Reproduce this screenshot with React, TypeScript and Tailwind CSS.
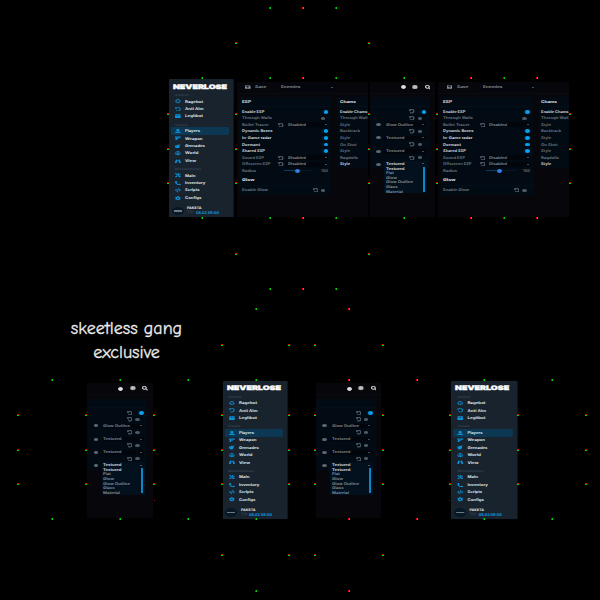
import React, { useLayoutEffect, useRef } from "react";
import { FaCog, FaCrosshairs, FaUndoAlt, FaMouse, FaBomb, FaGlobe, FaCode, FaTools, FaPhoneAlt, FaSave, FaSearch, FaCircle, FaUserAlt, FaSun, FaBinoculars } from "react-icons/fa";
import { FaGun } from "react-icons/fa6";

type Icon = React.ComponentType<{ className?: string; preserveAspectRatio?: string }>;

// A label stretched horizontally to an exact width. The hair of rotation keeps
// such small glyphs from being snapped to whole pixel rows.
function T({
  children,
  w,
  c = "text-[#7f8b95]",
  size = "text-[3.8px] font-bold",
}: {
  children: string;
  w: number;
  c?: string;
  size?: string;
}) {
  const ref = useRef<HTMLSpanElement>(null);
  useLayoutEffect(() => {
    const el = ref.current;
    if (!el) return;
    el.style.transform = "none";
    const natural = el.getBoundingClientRect().width;
    if (natural > 0) el.style.transform = `rotate(0.1deg) scaleX(${w / natural})`;
  }, [w]);
  return (
    <span className="flex shrink-0 items-center" style={{ width: w }}>
      <span ref={ref} className={`inline-block shrink-0 origin-left leading-none whitespace-nowrap ${size} ${c}`}>
        {children}
      </span>
    </span>
  );
}

const groups: { label: string; lw: number; items: [string, number, Icon][] }[] = [
  { label: "Aimbot", lw: 13, items: [["Ragebot", 18, FaCrosshairs], ["Anti Aim", 18.5, FaUndoAlt], ["Legitbot", 18, FaMouse]] },
  {
    label: "Visuals",
    lw: 12.5,
    items: [["Players", 15, FaUserAlt], ["Weapon", 17.5, FaGun], ["Grenades", 20, FaBomb], ["World", 13.5, FaGlobe], ["View", 11, FaBinoculars]],
  },
  {
    label: "Miscellaneous",
    lw: 26,
    items: [["Main", 10.5, FaTools], ["Inventory", 20.5, FaPhoneAlt], ["Scripts", 14.5, FaCode], ["Configs", 16.5, FaCog]],
  },
];

function Sidebar() {
  return (
    <div className="h-[138px] w-[64px] overflow-hidden rounded-t-[1px] bg-[#19232e] shadow-[1px_0_1px_#0b1a29]">
      <div className="flex h-[15px] items-center pl-[4px]">
        <T w={54} c="text-white" size="text-[6.2px] font-black [-webkit-text-stroke:0.35px_white]">NEVERLOSE</T>
      </div>
      {groups.map((g, gi) => (
        <div key={g.label} className={gi === 0 ? "-mt-[0.9px] mb-[2.9px]" : "mb-[2.9px]"}>
          <div className="flex h-[4.4px] items-center pl-[5.5px]">
            <T w={g.lw} c="text-[#3a4a59]" size="text-[3px] font-medium">{g.label}</T>
          </div>
          {g.items.map(([name, w, I]) => (
            <div
              key={name}
              className={`mr-[4px] ml-[2px] flex h-[7.45px] items-center gap-[4px] rounded-[1px] pl-[4px] ${name === "Players" ? "bg-[#0c3853]" : ""}`}
            >
              <I preserveAspectRatio="none" className="h-[4.4px] w-[5.8px] shrink-0 text-[#0d90d6]" />
              <T w={w} c="text-[#dde1e4]">{name}</T>
            </div>
          ))}
        </div>
      ))}
      <div className="flex h-[13px] items-center gap-[3.5px] pl-[2.5px]">
        <div className="flex h-[8.5px] w-[12px] shrink-0 items-center justify-center rounded-[50%] bg-[#071827]">
          <span className="h-[1.3px] w-[8px] bg-[#6c7983]" />
        </div>
        <div className="flex flex-col gap-[0.5px]">
          <T w={14.5} c="text-[#e8ebed]" size="text-[3.6px] font-bold">PAKETA</T>
          <div className="flex gap-[1.5px]">
            <T w={7} c="text-[#33414e]" size="text-[3.3px] font-bold">Till:</T>
            <T w={23} c="text-[#0c92da]" size="text-[3.8px] font-extrabold">08.02 09:00</T>
          </div>
        </div>
      </div>
    </div>
  );
}

function Eye({ c = "bg-[#4d5963]" }: { c?: string }) {
  return <span className={`h-[3px] w-[4.4px] rounded-[50%] ${c}`} />;
}
function Reset() {
  return (
    <FaUndoAlt preserveAspectRatio="none" className="h-[4.4px] w-[5.4px] shrink-0 stroke-[#5f6d78] stroke-[30] text-[#5f6d78]" />
  );
}
function Arrow() {
  return <span className="h-0 w-0 border-x-[1.9px] border-t-[1.8px] border-x-transparent border-t-[#8b949b]" />;
}
function Toggle() {
  return (
    <span className="flex h-[3.8px] w-[7px] justify-end rounded-full bg-[#031728]">
      <span className="h-[3.8px] w-[4.6px] rounded-[50%] bg-[#08a0ee]" />
    </span>
  );
}

const espRows: [string, number, "on" | "off" | "select" | "slider"][] = [
  ["Enable ESP", 22.5, "on"],
  ["Through Walls", 30, "off"],
  ["Bullet Tracer", 26.5, "select"],
  ["Dynamic Boxes", 30.5, "on"],
  ["In-Game radar", 29.5, "on"],
  ["Dormant", 18, "on"],
  ["Shared ESP", 23, "on"],
  ["Sound ESP", 22, "select"],
  ["Offscreen ESP", 28.5, "select"],
  ["Radius", 14, "slider"],
];

const chamRows: [string, number][] = [
  ["Enable Chams", 27.5],
  ["Through Wall", 27.5],
  ["Style", 10],
  ["Backtrack", 20],
  ["Style", 10],
  ["On Shot", 16.5],
  ["Style", 10],
  ["Ragdolls", 18],
  ["Style", 10],
];

function Title({ children, w }: { children: string; w: number }) {
  return (
    <div className="flex h-[9.7px] items-center border-b-[1px] border-[#03101b] pl-[2.7px]">
      <T w={w} c="text-[#e0e5e8]">{children}</T>
    </div>
  );
}

function MainPanel() {
  return (
    <div className="h-[135px] w-[131px] overflow-hidden bg-[#07070b]">
      <div className="flex h-[12px] items-center border-b-[1px] border-[#080c13]">
        <div className="ml-[3px] flex h-[8px] w-[33px] items-center gap-[4.5px] rounded-[1px] bg-[#06080e] pl-[5.5px]">
          <FaSave preserveAspectRatio="none" className="h-[4px] w-[5.5px] shrink-0 text-[#8495a1]" />
          <T w={11.5}>Save</T>
        </div>
        <div className="ml-[6px] flex h-[8px] w-[57px] items-center justify-between rounded-[1px] bg-[#03060c] pr-[3px] pl-[2.5px]">
          <T w={19.5}>Enemies</T>
          <Arrow />
        </div>
      </div>
      <div className="mt-[3.5px] flex gap-[6px] pl-[2.5px]">
        <div className="w-[92px] shrink-0">
          <div className="h-[78.5px] bg-[#020a13]">
            <Title w={9}>ESP</Title>
            <div className="pt-[1.3px]">
              {espRows.map(([name, w, kind]) => (
                <div key={name} className="flex h-[6.58px] items-center pr-[3px] pl-[2.7px]">
                  <div className="flex w-[36.3px] shrink-0 items-center">
                    <T w={w} c={kind === "on" ? "text-[#ccd3d8]" : "text-[#65727d]"}>{name}</T>
                  </div>
                  {kind === "on" && <div className="ml-auto flex"><Toggle /></div>}
                  {kind === "off" && <div className="mr-[3px] ml-auto flex"><Eye /></div>}
                  {kind === "select" && (
                    <>
                      <Reset />
                      <div className="ml-[2px] flex h-[4.8px] flex-1 items-center justify-between bg-[#02060c] pr-[1px] pl-[2px]">
                        <T w={18} c="text-[#76828c]">Disabled</T>
                        <Arrow />
                      </div>
                    </>
                  )}
                  {kind === "slider" && (
                    <>
                      <div className="ml-[6px] flex h-[1px] w-[29px] items-center bg-[#06182a]">
                        <span className="h-[1px] w-[11px] bg-[#063b65]" />
                        <span className="h-[3.8px] w-[5px] rounded-[50%] bg-[#347fe2]" />
                      </div>
                      <div className="ml-auto flex"><T w={7} c="text-[#65727d]">150</T></div>
                    </>
                  )}
                </div>
              ))}
            </div>
          </div>
          <div className="h-[19px] bg-[#020a13]">
            <Title w={12.5}>Glow</Title>
            <div className="flex h-[9.3px] items-center pr-[6px] pl-[2.7px]">
              <T w={26} c="text-[#65727d]">Enable Glow</T>
              <div className="ml-auto flex items-center gap-[3px]"><Reset /><Eye /></div>
            </div>
          </div>
        </div>
        <div className="h-[71px] w-[30.5px] shrink-0 bg-[#020a13]">
          <Title w={16}>Chams</Title>
          <div className="pt-[1.3px]">
            {chamRows.map(([name, w], i) => (
              <div key={i} className="flex h-[6.58px] items-center pl-[2.4px]">
                <T w={w} c={i === 0 || i === 8 ? "text-[#ccd3d8]" : "text-[#65727d]"}>{name}</T>
              </div>
            ))}
          </div>
        </div>
      </div>
    </div>
  );
}

const chamControls: [string, number][] = [
  ["toggle", 0],
  ["eye", 0],
  ["Glow Outline", 27],
  ["eye", 0],
  ["Textured", 18.5],
  ["eye", 0],
  ["Textured", 18.5],
  ["eye", 0],
];

const options: [string, number][] = [
  ["Textured", 18.5],
  ["Flat", 8],
  ["Glow", 11],
  ["Glow Outline", 27],
  ["Glass", 11.5],
  ["Material", 17],
];

function ChamsPanel() {
  return (
    <div className="h-[135px] w-[65.5px] overflow-hidden bg-[#07070b]">
      <div className="flex h-[12px] items-center justify-end gap-[6.5px] border-b-[1px] border-[#080c13] pr-[5px] text-[#dedede]">
        <FaCircle preserveAspectRatio="none" className="h-[4px] w-[5px]" />
        <FaSun preserveAspectRatio="none" className="h-[4.2px] w-[5.8px] stroke-current stroke-[40]" />
        <FaSearch preserveAspectRatio="none" className="h-[4.4px] w-[5.8px] stroke-current stroke-[30]" />
      </div>
      <div className="mt-[3.5px] h-[71px] w-[60px] bg-[#020a13]">
        <div className="h-[9.7px] border-b-[1px] border-[#03101b]" />
        <div className="pt-[1.3px]">
          {chamControls.map(([r, w], i) => (
            <div key={i} className="flex h-[6.58px] items-center">
              {w === 0 ? (
                <div className="ml-[39.7px] flex items-center">
                  <Reset />
                  <div className={r === "eye" ? "ml-[3px] flex" : "ml-[4.5px] flex"}>{r === "eye" ? <Eye /> : <Toggle />}</div>
                </div>
              ) : (
                <>
                  <div className="ml-[6.5px] flex w-[8px]"><Eye c="bg-[#5b6872]" /></div>
                  <div className="flex h-[4.8px] w-[42px] items-center justify-between bg-[#02060c] pr-[2px] pl-[1.5px]">
                    <T w={w} c="text-[#76828c]">{r}</T>
                    <Arrow />
                  </div>
                </>
              )}
            </div>
          ))}
          <div className="flex">
            <div className="mt-[2px] ml-[6.5px] flex h-[3px] w-[8px] shrink-0"><Eye c="bg-[#5b6872]" /></div>
            <div className="h-[32.5px] w-[43px] shrink-0 rounded-[1px] bg-[#03101d]">
              <div className="flex h-[5.8px] items-center justify-between pr-[3px] pl-[1.5px]">
                <T w={18.5} c="text-[#d0d6da]">Textured</T>
                <Arrow />
              </div>
              <div className="flex justify-between pr-[2px] pl-[1.5px]">
                <div>
                  {options.map(([o, w], i) => (
                    <div key={o} className={i === 0 ? "flex h-[4px] items-center" : "flex h-[4.65px] items-center"}>
                      <T w={w} c={i === 0 ? "text-[#d0d6da]" : "text-[#7b8791]"}>{o}</T>
                    </div>
                  ))}
                </div>
                <span className="h-[25px] w-[2.2px] bg-[#0c86c4]" />
              </div>
            </div>
          </div>
        </div>
      </div>
    </div>
  );
}

// Anchor points of the texture pieces. Those on horizontal edges are split
// left to right, those beside the pieces top to bottom.
const across = new Set([7, 77, 217, 288, 308, 379, 518, 590]);
const markers: [number, number][] = [
  [269, 7], [302, 7], [335, 7], [235, 42], [368, 42], [235, 253], [368, 253],
  [269, 288], [302, 288], [335, 288],
  [201, 77], [269, 77], [302, 77], [335, 77], [403, 77], [470, 77], [503, 77], [536, 77],
  [201, 217], [269, 217], [302, 217], [335, 217], [403, 217], [470, 217], [503, 217], [536, 217],
  [167, 113], [167, 148], [167, 182], [235, 113], [235, 148], [235, 182],
  [368, 113], [368, 148], [368, 182], [436, 113], [436, 148], [436, 182],
  [569, 113], [569, 148], [569, 182],
  [255, 308], [348, 308], [221, 344], [288, 344], [314, 344], [382, 344],
  [51, 379], [119, 379], [187, 379], [255, 379], [348, 379], [416, 379], [483, 379], [551, 379],
  [51, 518], [119, 518], [187, 518], [255, 518], [348, 518], [416, 518], [483, 518], [551, 518],
  [221, 554], [288, 554], [314, 554], [382, 554], [255, 590], [348, 590],
  ...[17, 85, 153, 221, 288, 314, 382, 449, 517, 585].flatMap((x) =>
    [414, 449, 483].map((y): [number, number] => [x, y])
  ),
];

export default function App() {
  return (
    <div className="relative h-[600px] w-[600px] overflow-hidden bg-black font-[Inter,'Liberation_Sans',sans-serif]">
      <div className="flex h-[317px] items-start pt-[79.2px] pl-[169.3px]">
        <Sidebar />
        <div className="mt-[2.7px] ml-[3.5px] flex">
          <MainPanel />
          <div className="ml-[2px]"><ChamsPanel /></div>
          <div className="ml-[3px]"><MainPanel /></div>
        </div>
      </div>
      <div className="h-[64px] pl-[66.5px]">
        <p className="w-[120px] text-center font-['Comic_Sans_MS','Comic_Neue','Open_Sans',sans-serif] text-[18px] leading-[24px] whitespace-nowrap text-[#ededed] [-webkit-text-stroke:0.3px_#ededed]">
          skeetless gang
          <br />
          exclusive
        </p>
      </div>
      <div className="flex items-start pl-[87.3px]">
        <div className="mt-[2px]"><ChamsPanel /></div>
        <div className="ml-[70.2px]"><Sidebar /></div>
        <div className="mt-[2px] ml-[29px]"><ChamsPanel /></div>
        <div className="ml-[70px] origin-left scale-x-[1.03]"><Sidebar /></div>
      </div>
      {markers.map(([x, y], i) => (
        <div
          key={i}
          className={across.has(y) ? "absolute flex h-[2px] w-[2px]" : "absolute flex h-[2px] w-[2px] flex-col"}
          style={{ left: x, top: y }}
        >
          <span className="flex-1 bg-[#e00000]" />
          <span className="flex-1 bg-[#00d800]" />
        </div>
      ))}
      <span className="absolute top-[500px] left-[154px] h-[1px] w-[1px] bg-[#c00000]" />
      <span className="absolute top-[500px] left-[449px] h-[1px] w-[1px] bg-[#900000]" />
    </div>
  );
}
